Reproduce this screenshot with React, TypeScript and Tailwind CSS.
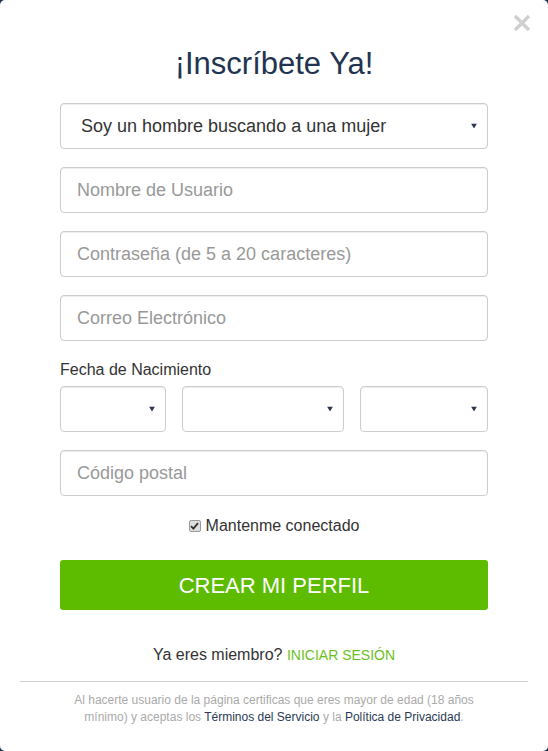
import React from "react";

const font = { fontFamily: '"Liberation Sans", Arial, sans-serif' };

function Arrow() {
  return (
    <svg
      aria-hidden="true"
      className="pointer-events-none absolute right-[11px] top-1/2 -translate-y-1/2"
      width="6"
      height="5"
      viewBox="0 0 6 5"
    >
      <path d="M0 0h6L3 5z" fill="#2b3650" />
    </svg>
  );
}

function SelectBox({ className, children }: { className?: string; children?: React.ReactNode }) {
  return (
    <div className={"relative " + (className ?? "")}>
      <select className="h-[46px] w-full appearance-none rounded-[4px] border border-[#ccc] bg-white pl-[20px] pr-8 text-[18px] text-[#333] shadow-[inset_0_1px_1px_rgba(0,0,0,0.075)] outline-none">
        {children}
      </select>
      <Arrow />
    </div>
  );
}

function TextField({ placeholder, type = "text" }: { placeholder: string; type?: string }) {
  return (
    <input
      type={type}
      placeholder={placeholder}
      className="mt-[18px] block h-[46px] w-full rounded-[4px] border border-[#ccc] bg-white px-[16px] text-[18px] text-[#333] shadow-[inset_0_1px_1px_rgba(0,0,0,0.075)] outline-none placeholder:text-[#999]"
    />
  );
}

export default function App() {
  return (
    <main className="h-[751px] w-full bg-[#1d2c48]" style={font}>
      <div className="relative flex h-full flex-col rounded-[5px] bg-white">
        <button
          aria-label="Cerrar"
          className="absolute right-[17px] top-[14px] flex h-[18px] w-[18px] items-center justify-center"
        >
          <svg width="18" height="18" viewBox="0 0 18 18">
            <path d="M2 2L16 16M16 2L2 16" stroke="#cfcfcf" strokeWidth="3.2" strokeLinecap="butt" />
          </svg>
        </button>

        <h1 className="mt-[46px] text-center text-[31px] leading-[36px] text-[#22344f]">
          ¡Inscríbete Ya!
        </h1>

        <form className="mt-[21px] px-[60px]">
          <SelectBox>
            <option>Soy un hombre buscando a una mujer</option>
            <option>Soy una mujer buscando a un hombre</option>
          </SelectBox>

          <TextField placeholder="Nombre de Usuario" />
          <TextField placeholder="Contraseña (de 5 a 20 caracteres)" type="password" />
          <TextField placeholder="Correo Electrónico" type="email" />

          <label className="mt-[19px] mb-[6px] block text-[16px] leading-[20px] text-[#333]">
            Fecha de Nacimiento
          </label>
          <div className="flex gap-[16px]">
            <SelectBox className="w-[106px]">
              <option></option>
            </SelectBox>
            <SelectBox className="w-[162px]">
              <option></option>
            </SelectBox>
            <SelectBox className="flex-1">
              <option></option>
            </SelectBox>
          </div>

          <TextField placeholder="Código postal" />

          <div className="mt-[20px] flex items-center justify-center gap-[5px] text-[16px] leading-[20px] text-[#333]">
            <span className="flex h-[12px] w-[12px] items-center justify-center rounded-[2px] border border-[#9a9a9a] bg-[#dedede]">
              <svg width="9" height="8" viewBox="0 0 9 8">
                <path d="M1 4.2L3.4 6.6L8 1.2" fill="none" stroke="#333" strokeWidth="1.8" />
              </svg>
            </span>
            Mantenme conectado
          </div>

          <button
            type="button"
            className="mt-[24px] h-[50px] w-full rounded-[3px] bg-[#5dbb00] text-[22px] text-white"
          >
            CREAR MI PERFIL
          </button>

          <p className="mt-[35px] text-center text-[16px] leading-[20px] text-[#333]">
            Ya eres miembro?{" "}
            <a className="text-[14px] text-[#6abf1e]">INICIAR SESIÓN</a>
          </p>
        </form>

        <div className="mx-[20px] mt-[16px] border-t border-[#d0d0d0]" />

        <p className="mt-[10px] text-center text-[12px] leading-[17px] text-[#aaa]">
          Al hacerte usuario de la página certificas que eres mayor de edad (18 años
          <br />
          mínimo) y aceptas los <a className="text-[#2a3a55]">Términos del Servicio</a> y la{" "}
          <a className="text-[#2a3a55]">Política de Privacidad</a>.
        </p>
      </div>
    </main>
  );
}
